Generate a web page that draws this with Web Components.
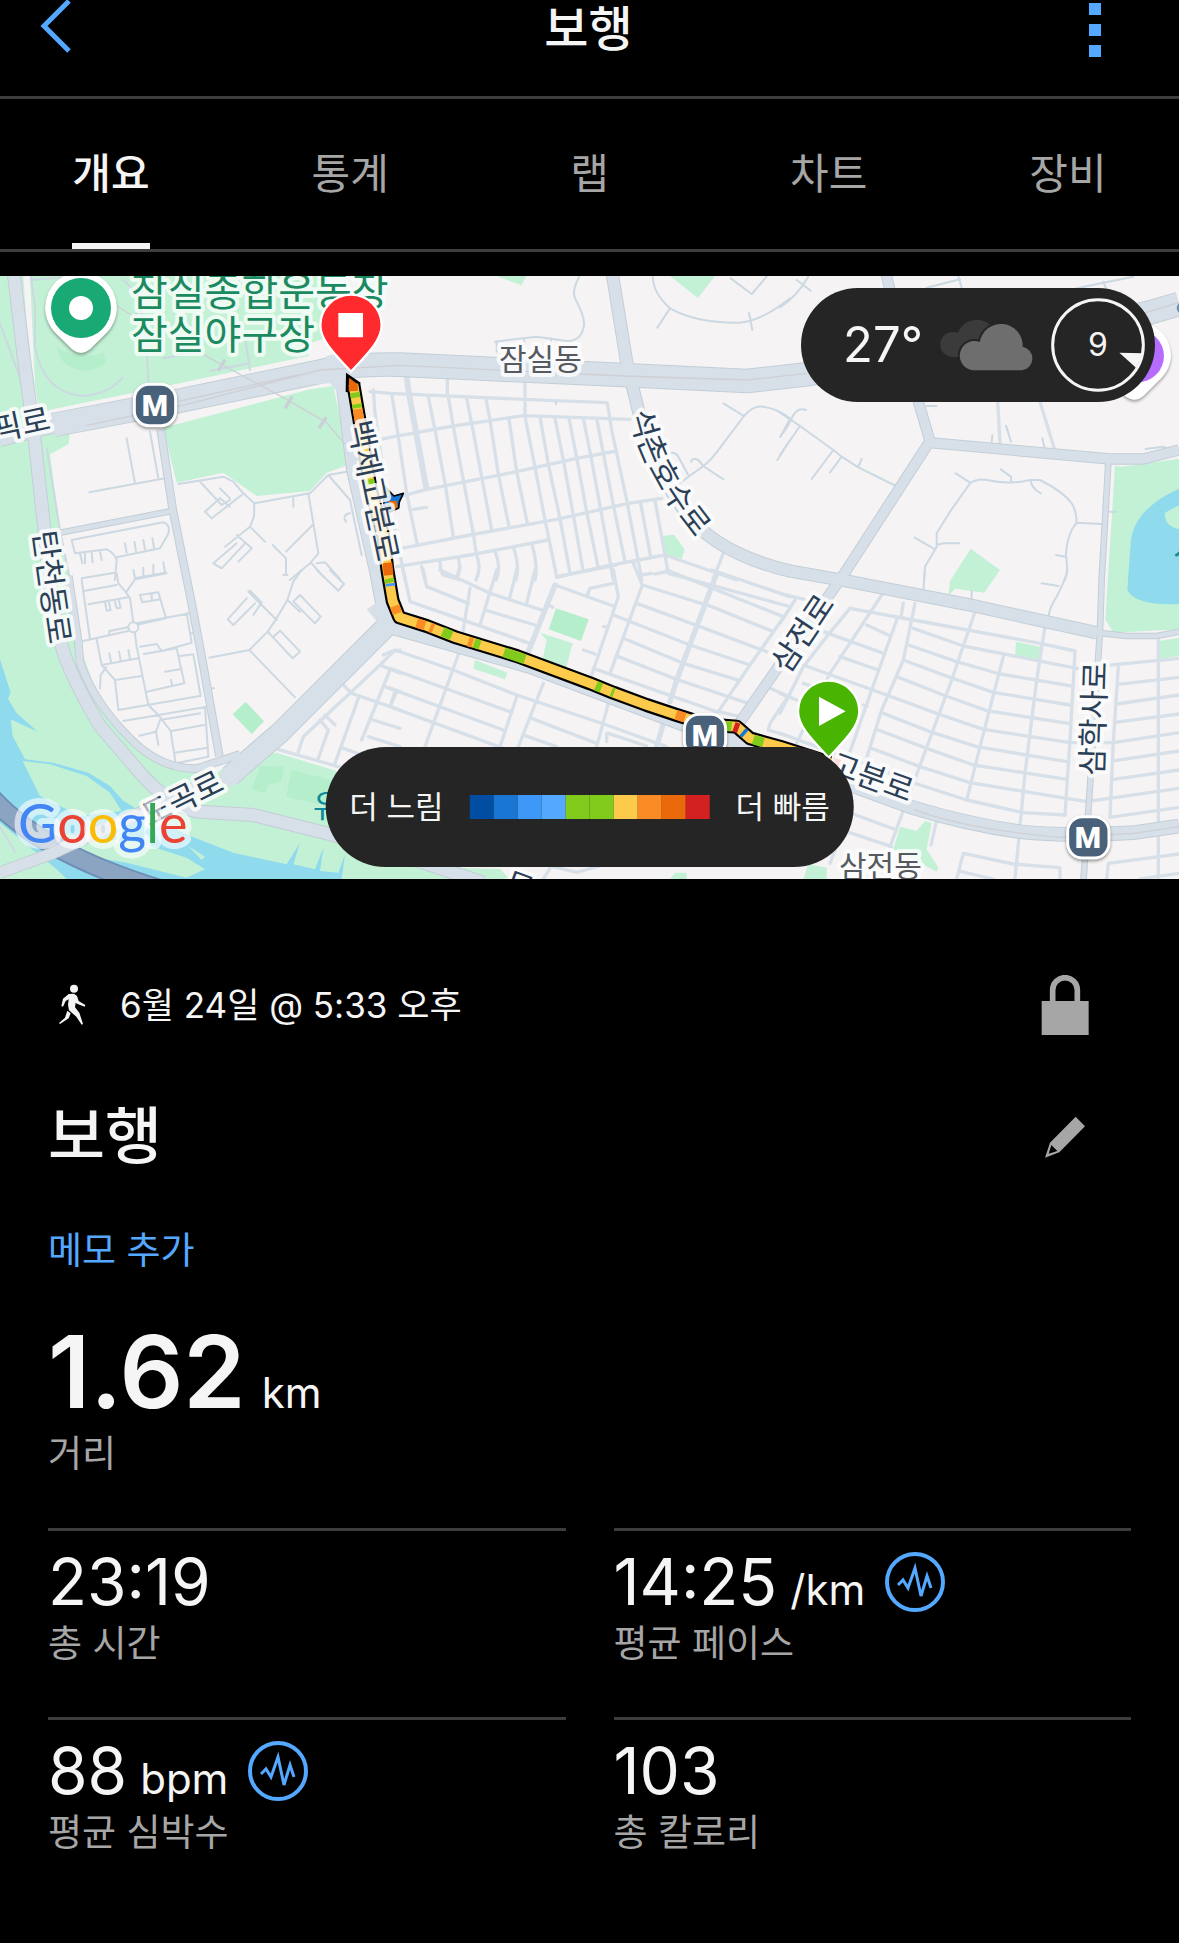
<!DOCTYPE html>
<html lang="ko">
<head>
<meta charset="utf-8">
<meta name="viewport" content="width=device-width, initial-scale=1">
<title>보행</title>
<style>
  body {
    margin: 0;
    min-height: 100vh;
    background: #000;
    color: #f5f5f5;
    font-family: Inter, "Noto Sans CJK KR", sans-serif;
    --blue: #54a8ff;
    --line: #3d3d3d;
    --muted: #a6a6a6;
    --panel: #252525;
  }
</style>
</head>
<body>
<app-header>보행</app-header>
<tab-bar>
  <tab-item active>개요</tab-item>
  <tab-item>통계</tab-item>
  <tab-item>랩</tab-item>
  <tab-item>차트</tab-item>
  <tab-item>장비</tab-item>
</tab-bar>
<route-map>
  <weather-badge slot="top" wind="9">27°</weather-badge>
  <pace-legend slot="bottom">
    <span slot="slow">더 느림</span>
    <span slot="fast">더 빠름</span>
  </pace-legend>
</route-map>
<activity-details>
  <span slot="date">6월 24일 @ 5:33 오후</span>
  <span slot="name">보행</span>
  <span slot="note">메모 추가</span>
  <stat-item slot="main" large value="1.62" unit="km">거리</stat-item>
  <stat-item value="23:19">총 시간</stat-item>
  <stat-item value="14:25" unit="/km" chart>평균 페이스</stat-item>
  <stat-item value="88" unit="bpm" chart>평균 심박수</stat-item>
  <stat-item value="103">총 칼로리</stat-item>
</activity-details>

<script>
const base_css = `
* {
    box-sizing: border-box;
}
button {
    border: none;
    background: none;
    padding: 0;
    margin: 0;
    color: inherit;
    font: inherit;
    cursor: pointer;
}
svg {
    display: block;
}
`

function makeTemplate(css, html){
    const template = document.createElement('template')
    template.innerHTML = `<style>${base_css}${css}</style>${html}`
    return template
}

class BaseElement extends HTMLElement{
    constructor(){
        super()
        this.attachShadow({mode:'open'})
        this.shadowRoot.appendChild(this.constructor.template.content.cloneNode(true))
    }
}

// header
class AppHeader extends BaseElement{
    static template = makeTemplate(`
:host {
    display: grid;
    grid-template-columns: 1fr auto 1fr;
    align-items: center;
    padding: 0 54px 38px 24px;
    border-bottom: 3px solid var(--line);
}
h1 {
    margin: 0 0 0 28px;
    font-size: 48px;
    line-height: 58px;
    font-weight: 500;
}
.menuBtn {
    justify-self: end;
}
`, `
<button class="backBtn" aria-label="뒤로">
    <svg width="60" height="58" viewBox="0 0 60 58" fill="none" stroke="#54a8ff" stroke-width="5"><path d="M45,1 L20,26 L45,51"/></svg>
</button>
<h1><slot></slot></h1>
<button class="menuBtn" aria-label="메뉴">
    <svg width="60" height="58" viewBox="0 0 60 58" fill="#54a8ff"><path d="M24,3h12v12h-12z M24,24h12v12h-12z M24,45h12v12h-12z"/></svg>
</button>
`)
}

// tabs
class TabBar extends BaseElement{
    static template = makeTemplate(`
:host {
    display: block;
    border-bottom: 3px solid var(--line);
    margin-bottom: 24px;
}
nav {
    display: flex;
    justify-content: space-between;
    padding: 0 72px;
}
`, `<nav><slot></slot></nav>`)
}

class TabItem extends BaseElement{
    static template = makeTemplate(`
:host {
    display: block;
    width: 78px;
}
a {
    display: block;
    padding: 48px 0 42px;
    border-bottom: 6px solid transparent;
    color: var(--muted);
    font-size: 42px;
    line-height: 54px;
    text-align: center;
    white-space: nowrap;
    text-decoration: none;
}
:host([active]) a {
    color: #f5f5f5;
    font-weight: 500;
    border-color: #f5f5f5;
}
`, `<a href="#"><slot></slot></a>`)
}

// weather badge
class WeatherBadge extends BaseElement{
    static template = makeTemplate(`
:host {
    display: flex;
    align-items: center;
    gap: 17px;
    height: 114px;
    padding: 0 10px 0 42px;
    border-radius: 57px;
    background: var(--panel);
}
.temp {
    font-size: 49px;
    line-height: 60px;
    font-weight: 400;
}
.wind {
    display: grid;
    place-items: center;
    font-size: 32px;
    line-height: 40px;
    font-weight: 400;
}
.wind > * {
    grid-area: 1 / 1;
}
`, `
<span class="temp"><slot></slot></span>
<svg width="94" height="54" viewBox="480 144 282 162">
    <path fill="#3b3b3b" d="M518,261 a37,37 0 0 1 0,-75 q8,0 16,2 a60,60 0 0 1 112,0 v73z"/>
    <path fill="#6e6e6e" stroke="#252525" stroke-width="12" paint-order="stroke" d="M580,301 a44,44 0 1 1 19,-85 a65,65 0 0 1 129,14 a36,36 0 0 1 -2,71z"/>
</svg>
<div class="wind">
    <svg width="94" height="94" viewBox="813 83 282 282">
        <circle cx="954" cy="224" r="136" fill="none" stroke="#f5f5f5" stroke-width="9"/>
        <path fill="#f5f5f5" d="M1018,247 L1090,249 L1068,292z"/>
    </svg>
    <span id="wind"></span>
</div>
`)
    connectedCallback(){
        this.shadowRoot.getElementById('wind').textContent = this.getAttribute('wind')
    }
}

// pace legend
class PaceLegend extends BaseElement{
    static template = makeTemplate(`
:host {
    display: flex;
    align-items: center;
    gap: 26px;
    height: 120px;
    padding: 0 24px;
    border-radius: 60px;
    background: var(--panel);
    font-size: 31px;
    line-height: 40px;
    font-weight: 400;
    white-space: nowrap;
}
.bar {
    display: flex;
    height: 24px;
}
.bar i {
    width: 24px;
}
`, `
<slot name="slow"></slot>
<div class="bar"></div>
<slot name="fast"></slot>
`)
    connectedCallback(){
        const colors = ['#004da1','#1976d2','#3d98f7','#54a8ff','#81cb1c','#81cb1c','#fccb4b','#fb8b24','#ea690b','#d32020']
        this.shadowRoot.querySelector('.bar').innerHTML = colors.map(c => `<i style="background:${c}"></i>`).join('')
    }
}

// map
class RouteMap extends BaseElement{
    static template = makeTemplate(`
:host {
    display: grid;
    position: relative;
    height: 603px;
    overflow: hidden;
    background: #f5f3f4;
}
svg {
    grid-area: 1 / 1;
    width: 100%;
    height: 603px;
}
.road {
    fill: none;
    stroke-linejoin: round;
}
.edge {
    stroke: #c3ced7;
}
.fillRoad {
    stroke: #d7e0e8;
}
.street {
    fill: none;
    stroke: #d7e0e8;
    stroke-width: 10;
    stroke-linejoin: round;
    stroke-linecap: round;
}
.lane {
    fill: none;
    stroke: #ccd8e2;
    stroke-width: 6;
    stroke-linejoin: round;
    stroke-linecap: round;
}
text {
    font-family: "Noto Sans CJK KR", sans-serif;
    paint-order: stroke;
    stroke: rgba(253, 253, 253, .85);
    stroke-width: 8px;
    stroke-linejoin: round;
    fill: #2b3f57;
    font-size: 31px;
}
.place {
    font-size: 40px;
    fill: #1b8a60;
    stroke: rgba(245, 253, 249, .85);
}
.area {
    fill: #565a5f;
    font-size: 30px;
}
.metro {
    font-family: Roboto, sans-serif;
    font-size: 30px;
    font-weight: 900;
    fill: #fff;
    stroke: none;
    text-anchor: middle;
}
.google {
    font-family: Lato, sans-serif;
    font-size: 54px;
    font-weight: 400;
    stroke: rgba(255, 255, 255, .6);
    stroke-width: 12px;
}
.top {
    position: absolute;
    top: 12px;
    right: 24px;
}
.bottom {
    position: absolute;
    bottom: 12px;
    left: 50%;
    transform: translateX(-50%);
}
`, `
<svg viewBox="0 0 3537 1809" preserveAspectRatio="xMidYMid slice" aria-hidden="true">
    <!-- parks -->
    <g fill="#c3f1d5">
        <path d="M0,-18 H985 L968,190 L930,200 L925,240 L500,330 L160,400 L100,420 L150,470 L210,472 L205,505 L150,535 L180,760 L205,900 L240,1110 L300,1280 L420,1410 L540,1475 L640,1500 L700,1450 L830,1430 L1010,1485 H1300 V1809 H0z"/>
        <path d="M490,455 L930,340 L1000,330 L1050,565 L980,590 L930,645 L770,660 L670,590 L530,620z"/>
        <path d="M1490,0 H1578 L1565,28z M2010,0 H2145 L2094,66z"/>
        <path d="M1985,780 L2022,776 L2054,820 L2045,848 L1990,835z"/>
        <path d="M1620,1070 L1718,1102 L1698,1176 L1628,1150 L1640,1092z M1425,1152 L1522,1190 L1515,1210 L1420,1178z"/>
        <path d="M3345,570 L3365,572 L3537,548 V1060 L3340,1070 L3316,1030z M3477,1095 L3537,1085 V1140 L3477,1150z"/>
        <path d="M2912,818 L3000,882 L2953,950 L2865,938 L2845,960 L2850,915z M3048,1097 L3120,1112 L3117,1155 L3045,1140z"/>
        <path d="M2700,1652 L2750,1665 L2775,1635 L2795,1640 L2780,1720 L2815,1775 L2810,1787 L2680,1720z M2425,1765 L2480,1775 V1809 H2410z"/>
        <path d="M1170,1770 L1500,1779 L1530,1809 H1170z M2025,1790 h35 v19 h-50z"/>
    </g>
    <path fill="#f5f3f4" d="M90,0 L105,330 L118,415 L150,405 L350,360 L160,400 L98,410 L70,0z"/>
    <g fill="#b4eecb">
        <path d="M170,215 q80,40 140,15 l8,30 q-70,50 -130,-5z"/>
        <path d="M737,1277 L792,1336 L755,1374 L698,1315z M1668,997 L1766,1030 L1743,1095 L1646,1060z"/>
        <path d="M780,1470 l72,2 l-8,45 l-42,10 l-5,24 l-42,-10z M875,1482 L1005,1515 V1595 L858,1562z"/>
    </g>
    <!-- water -->
    <g fill="#90daee">
        <path d="M0,1150 L32,1250 L24,1268 L50,1312 L114,1368 L32,1330 L38,1380 L75,1450 L160,1460 L265,1490 L330,1530 L370,1575 L430,1610 L570,1680 L700,1730 L860,1765 L900,1700 L880,1765 L945,1780 L970,1715 L960,1785 L1015,1790 L1035,1735 L1025,1809 H0z"/>
        <path d="M3537,638 Q3400,700 3392,800 L3382,940 Q3400,990 3537,984z"/>
    </g>
    <path fill="#c3f1d5" d="M68,1455 L150,1465 L260,1500 L330,1550 L365,1605 L240,1620 L120,1560z M60,1655 L240,1680 L420,1700 L560,1745 L615,1780 L560,1805 L380,1760 L200,1730z M565,1710 l50,32 l-10,10 z M3495,710 l42,-22 v72 q-45,-10 -42,-50z M0,1640 L170,1780 L200,1809 H0z"/>
    <path class="road" stroke="#6d8fb5" stroke-width="62" d="M-30,1560 Q120,1730 480,1840"/>
    <path class="road" stroke="#8ba4c2" stroke-width="50" d="M-30,1560 Q120,1730 480,1840"/>

    <!-- apartment lanes, north west -->
    <g class="lane" transform="translate(0 -18)">
        <path d="M95,30 L210,20 M90,0 L105,110 V230 Q130,370 250,378 Q330,370 368,322 M0,160 L70,350 M370,30 L420,80 L440,240 L445,335 M490,265 L600,245 M735,200 L750,300 M630,302 L750,280 M400,140 L480,60"/>
        <path d="M380,505 L405,640 M268,667 L495,625 M450,485 L475,625 M140,535 L180,780 L210,930 M535,642 L670,620 L700,635 L730,670 L763,700 L930,670 L985,615 L1040,605 M763,700 L762,740 L750,770 L675,830 M600,635 L665,705 L690,690 M660,655 L690,685 M725,675 L635,745 L615,725 L660,685 L690,710 M750,770 L795,815 M710,795 L755,835 L715,875 M735,820 L665,895 L640,880 L710,820 M818,825 L858,865 V915 M925,670 L955,850 L930,880 L870,930 M938,765 L858,845 M985,615 L1050,690 L1085,855 M1050,730 q-25,5 -12,25 M935,880 L970,920 M950,880 l25,-3 l45,50 M880,685 v25"/>
        <path d="M215,810 L225,850 L320,838 Q345,850 350,870 L345,930 M215,810 L490,757 Q515,765 503,795 L480,835 L350,862 M240,850 L247,880 M255,850 v30 M275,848 L278,877 M300,845 L305,870 M375,820 L380,848 M403,815 L408,843 M430,810 L435,838 M457,805 L462,833 M400,900 L405,925 L495,908 L490,877 M430,893 v25 M460,885 v25 M245,925 L345,908"/>
    </g>
    <g class="lane" transform="translate(0 882)">
        <path d="M245,30 L270,208 M255,62 L350,45 M265,103 L385,82 M350,10 L355,40 L378,67 L405,28 L500,10 M378,67 L390,85 L410,230 L445,405 L475,435 L512,483 L527,580 L625,560 L615,410 M420,75 L475,67 L498,145 L385,170 M420,75 L427,97 L482,88 M455,72 v20 M315,97 l5,25 l12,-2 l-5,-22 M345,95 l5,20 l12,-2 l-5,-20 M240,215 L330,195 L385,183 M328,195 V183 L385,172 M290,208 L305,285 L345,330 L355,420 L600,378 M305,285 L415,265 M345,330 L425,318 M300,355 L302,315 L318,292 M328,250 L333,275 M357,245 L362,270 M385,240 L390,265 M420,230 L470,222 L485,243 L575,218 L560,130 M432,252 L530,235 L553,340 L440,365 M495,305 L545,297 M513,330 L517,348 M540,258 L580,253 L602,378 M370,453 L620,410 M418,497 L468,485 L475,525 M468,485 L480,450 L600,430 M515,483 L612,465 M523,548 L625,533 M410,160 L570,130 M570,190 h12 M632,355 h10"/>
        <path d="M628,263 L748,240 L803,185 L830,145 L862,90 L880,35 L905,0 M748,240 L885,382 M830,150 L745,65 L750,62 L785,97 L760,135 M740,85 L683,148 L700,165 L765,100 M862,90 L900,125 M880,95 L900,75 L962,140 L945,160 L880,95 M803,185 L878,265 L900,245 L840,182 L820,200 M950,0 L1015,62 L1032,42 L990,0 M850,15 h12 M0,770 L45,845"/>
        <circle cx="400" cy="172" r="15" fill="#f5f3f4"/>
    </g>
    <g class="street" transform="translate(0 882)">
        <path d="M805,530 L1015,590 L1200,640 M1015,330 L1055,370 L1200,420 M895,545 L910,500 L1140,285 L1180,245 L1200,240 M1140,285 L1200,310 M1170,300 L1085,510 M1075,385 L1005,580 M955,565 L985,480 L960,450 M975,435 L1005,465 M1120,450 L1200,475 M1105,500 L1200,530 M1030,535 L1100,560 M1155,350 L1200,365 M1190,365 L1175,400 M945,400 l12,12"/>
    </g>

    <!-- grid blocks south of 잠실동 -->
    <g class="street" transform="translate(1170 -18)">
        <path d="M-60,365 L0,370 L400,388 L652,398 L665,480 L710,690 L750,900 L755,930 M-60,515 L0,502 L190,468 L400,437 L720,448 M30,680 L110,658 L380,605 L560,565 L680,543 M35,835 L240,795 L500,748 L715,700 L815,685 M20,890 L240,855 L475,810 M500,922 L640,890 L825,855 M405,335 V437 M172,325 V375"/>
        <path d="M5,370 L25,500 L50,670 L82,825 M115,380 L135,480 L165,640 L190,800 M175,380 L190,470 L220,630 L250,790 L258,845 M230,385 L245,460 L275,620 L305,780 M288,388 L300,450 L325,612 L357,770 M357,448 L380,605 L412,760 M405,440 L435,592 L465,750 L500,920 M450,440 L475,583 L510,745 L540,910 M495,445 L520,570 L550,735 L580,905 M537,445 L560,562 L590,725 L625,895 M580,445 L602,555 L632,718 L670,930 M620,445 L640,550 L670,705 L705,875 M752,700 L782,860 M795,692 L835,910 L1200,1010 M825,855 L1040,930 M1000,850 L970,925"/>
        <path d="M70,718 L110,712 M150,870 Q150,905 160,915 L210,930 M205,865 Q215,900 200,925 M260,855 Q275,895 258,930 M315,845 Q335,890 318,930 M370,830 Q390,890 378,930 M425,820 Q445,890 435,930 M95,890 L105,930 M10,750 L45,930 M-50,360 L-45,430 L0,750 M755,915 l30,-5 M795,912 l35,-7"/>
    </g>
    <g class="lane" transform="translate(1170 -18)">
        <path d="M568,20 Q545,60 555,85 Q590,150 580,175 Q570,215 530,213 L440,200 L315,215 M320,215 v30 M403,205 v20 M483,205 v15 M788,20 Q790,70 840,115 Q920,160 1050,158 Q1120,150 1200,85 M840,115 L802,173 M1077,128 L1087,180 M1022,25 L1085,72 L1130,20 M1000,400 L1062,438 M855,650 L940,588 Q965,570 1000,520 L1062,438 Q1090,405 1120,410 Q1160,415 1200,445 L1172,500 M1200,510 L1162,570 M940,588 L1000,628 M940,588 L925,570 Q908,562 903,575 M828,555 Q855,540 865,560 L895,615 M498,395 v8"/>
    </g>
    <g class="lane" transform="translate(2340 -18)">
        <path d="M0,112 Q50,80 85,20 M50,30 L92,62 M440,53 L540,28 M535,20 L545,53 M890,55 L1060,20 M970,35 l8,20 M0,428 L60,468 L160,540 L185,560 L235,592 L348,648 M0,500 Q25,470 35,445 Q50,410 78,420 M60,468 L0,555 M160,540 L95,627 M185,560 L150,607 M235,590 L245,567 M440,408 h30 M637,495 L635,515 M678,467 L693,515 M787,505 L793,530"/>
        <path d="M432,930 L435,890 L470,830 V790 L510,725 L570,640 Q590,625 620,630 Q690,645 750,630 H780 Q850,665 875,700 Q890,725 890,758 Q862,790 858,850 L862,900 L855,930 M527,610 L570,638 M662,598 L693,620 V638 M752,632 Q755,655 782,670 M404,803 L465,838 M470,825 L490,820 H538 M890,758 L965,762 M828,855 L858,860 M990,725 h20 M1097,537 L1150,530 Q1165,535 1160,545"/>
        <path d="M435,900 L430,962 M575,962 v25 M860,900 L862,905 Q855,930 830,980 Q810,1010 805,1040 M785,940 L835,948"/>
    </g>
    <path class="street" d="M2993,377 L3000,500 M3120,377 L3162,515"/>

    <!-- grid blocks around 삼전동 -->
    <g class="street" transform="translate(1170 882)">
        <path d="M15,240 L190,300 L380,375 L650,465 L830,530 M-20,255 L15,240 M0,295 L360,425 M0,355 L340,480 M0,410 L340,535 M15,365 L0,410 M320,0 L270,165 M240,55 L210,240 L105,530 M460,340 L385,530 M380,380 L330,530 M655,400 L620,530 M40,0 L60,95 L420,220 M100,0 L110,50 L235,100 M150,0 L300,70 L455,120 M285,120 L435,165 M435,0 L410,100 M380,0 L360,80 M210,-10 L200,20 M425,445 L620,520 M405,497 L500,530"/>
        <path d="M495,45 L670,108 M500,20 L680,-15 M590,80 L600,55 L670,40 M670,0 L685,80 L605,315 M730,-20 L757,45 L660,310 M757,45 L965,110 L1150,185 M830,0 L1180,140 M740,100 L930,170 L1130,245 M670,135 L900,225 L1080,285 M700,205 L880,280 L1050,332 M685,260 L860,328 L1075,400 M610,295 L850,380 L980,425 M1200,115 L1080,285 L985,425 L1050,440 M965,0 L1200,80 M580,240 L615,252 M475,105 L488,112 M640,170 h10 M1140,355 L1200,380 M1200,370 L1140,460 L1135,480 L1200,500 M655,490 L770,528 M650,515 V490 M480,895 L460,927 M490,890 L560,907 L640,885"/>
        <path stroke-width="16" d="M495,45 L415,245 M980,10 L860,330 L840,395 M820,460 L800,530"/>
    </g>
    <path fill="none" stroke="#d7e0e8" stroke-width="18" d="M1220,300 L1225,342 L1280,642"/>
    <g class="street" transform="translate(2340 882)">
        <path d="M210,115 L140,200 L70,290 L0,430 M305,75 L150,310 L45,530 M350,150 L275,360 L205,560 M405,100 L370,270 L305,420 L255,580 M585,125 L515,330 L400,640 L330,830 M670,260 L600,530 L560,690 M795,170 L770,330 L735,610 L705,927 M885,243 L870,510 L855,735 M1015,290 L1000,515 L990,740 M1135,200 V927 M370,100 L363,140 M0,70 L80,90 M45,90 L0,160"/>
        <path d="M210,115 L400,150 L780,220 L885,243 M400,175 L550,228 L890,295 L1197,265 M385,225 L530,275 L660,312 L875,348 M370,270 L510,322 L640,367 L870,405 M350,320 L490,375 L620,422 L865,460 M130,185 L305,248 M180,260 L295,300 M260,165 L330,197 M70,285 L320,375 L470,430 L610,478 L870,518 H1000 L1197,488 M310,430 L450,485 L590,530 L860,575 M295,480 L440,535 L580,585 L860,628 M275,535 L420,590 L570,638 L920,695 L1197,655 M0,490 L250,580 L405,640 L560,690 L730,728 L855,735 M0,370 L50,390 M70,340 L130,360"/>
        <path d="M1015,343 L1197,322 M1010,402 L1197,375 M1005,457 L1197,432 M1005,572 L1197,543 M1000,628 L1197,600 M990,742 L1197,712 M530,927 L550,850 L700,882 L840,893 V927 M545,905 L640,927 M980,927 L985,880 L1197,852 M1080,927 L1197,910 M200,725 L350,780 M200,785 L335,830 M150,880 L165,840 M250,405 l12,3 M470,750 L453,825"/>
    </g>

    <!-- main roads: outline first, then surface -->
    <g class="road edge">
        <path stroke-width="74" d="M160,447 L500,382 L960,287 Q1050,262 1200,266 L1500,280 L1870,297 L2240,315 L2420,295 L3440,112 L3537,84"/>
        <path stroke-width="42" d="M0,492 L200,442 M40,-20 L72,250 L105,500 L135,780 L155,960 L185,1110 Q210,1200 300,1350 L420,1490 Q520,1600 600,1607 L760,1617 L1000,1677 L1270,1760 L1450,1820"/>
        <path stroke-width="38" d="M0,1790 L150,1735 L420,1610 L640,1510"/>
        <path stroke-width="66" d="M690,1500 L730,1465 L840,1370 L1160,1050"/>
        <path stroke-width="26" d="M482,460 L518,700 L575,982 L605,1142 L658,1440 M205,900 L235,1100 L240,1160 Q290,1300 420,1415 Q500,1480 590,1478 L720,1435"/>
        <path stroke-width="20" d="M180,770 L515,705"/>
        <path stroke-width="44" d="M1025,290 L1060,580 L1130,890 L1160,1050 L1590,1172 L2010,1330 L2260,1420 L2730,1592 Q2900,1645 3060,1667 Q3200,1682 3400,1670 L3537,1650"/>
        <path stroke-width="40" d="M1835,-18 L1882,270 L1912,390 Q1950,560 2050,700 Q2140,830 2370,885 L2540,915 L2900,985 L3290,1070"/>
        <path stroke-width="34" d="M2655,-18 L2755,377 L2790,495 L2530,897 L2330,1180 L2170,1410 M2790,500 L3330,549 H3430 L3537,522"/>
        <path stroke-width="20" d="M3290,1070 L3380,1080 H3470 L3537,1067 M3325,560 L3305,910 L3300,1062 L3270,1530 L3250,1820"/>
    </g>
    <g class="road fillRoad">
        <path stroke-width="68" d="M160,447 L500,382 L960,287 Q1050,262 1200,266 L1500,280 L1870,297 L2240,315 L2420,295 L3440,112 L3537,84"/>
        <path stroke-width="36" d="M0,492 L200,442 M40,-20 L72,250 L105,500 L135,780 L155,960 L185,1110 Q210,1200 300,1350 L420,1490 Q520,1600 600,1607 L760,1617 L1000,1677 L1270,1760 L1450,1820"/>
        <path stroke-width="32" d="M0,1790 L150,1735 L420,1610 L640,1510"/>
        <path stroke-width="60" stroke-linecap="round" d="M690,1500 L730,1465 L840,1370 L1160,1050"/>
        <path stroke-width="20" d="M482,460 L518,700 L575,982 L605,1142 L658,1440 M205,900 L235,1100 L240,1160 Q290,1300 420,1415 Q500,1480 590,1478 L720,1435"/>
        <path stroke-width="14" d="M180,770 L515,705"/>
        <path stroke-width="38" d="M1025,290 L1060,580 L1130,890 L1160,1050 L1590,1172 L2010,1330 L2260,1420 L2730,1592 Q2900,1645 3060,1667 Q3200,1682 3400,1670 L3537,1650"/>
        <path stroke-width="34" d="M1835,-18 L1882,270 L1912,390 Q1950,560 2050,700 Q2140,830 2370,885 L2540,915 L2900,985 L3290,1070"/>
        <path stroke-width="28" d="M2655,-18 L2755,377 L2790,495 L2530,897 L2330,1180 L2170,1410 M2790,500 L3330,549 H3430 L3537,522"/>
        <path stroke-width="14" d="M3290,1070 L3380,1080 H3470 L3537,1067 M3325,560 L3305,910 L3300,1062 L3270,1530 L3250,1820"/>
    </g>
    <path fill="#d7e0e8" d="M1100,1000 L1160,960 L1230,1060 L1160,1070z M980,240 L1060,225 L1060,340 L1010,345 L990,322 L940,325z"/>
    <path class="road" stroke="#cfcfd6" stroke-width="4" d="M260,448 L560,385 L960,282 L1200,268 L1870,300 L2240,312 L2420,292 M540,375 L900,295 M3430,112 L3537,80 M610,236 L860,370 L980,440 L1035,505 M350,90 L400,120 M2740,1600 Q2900,1660 3180,1684 L3400,1672 L3537,1652"/>
    <path class="road" stroke="#c9d0d8" stroke-width="10" d="M855,397 l22,-36 M957,457 l22,-34 M655,285 l20,-34"/>
    <path fill="#f8dcd8" d="M2500,1445 L2552,1455 L2540,1478 L2510,1470z"/>

    <!-- recorded track -->
    <g fill="none" stroke-linejoin="round">
        <path fill="#000" d="M1038,290 L1082,320 L1060,350 L1037,348z"/>
        <path stroke="#000" stroke-width="42" d="M1060,325 L1078,430 L1112,640 L1150,780 L1162,880 L1166,905 L1178,975 L1198,1024 L1280,1050 L1370,1085 L1550,1140 L1770,1222 L1840,1250 L1940,1287 L2030,1317 L2120,1345 L2210,1352 L2250,1387 L2340,1412 L2490,1460"/>
        <path stroke="#fccb4b" stroke-width="29" d="M1060,325 L1078,430 L1112,640 L1150,780 L1162,880 L1166,905 L1178,975 L1198,1024 L1280,1050 L1370,1085 L1550,1140 L1770,1222 L1840,1250 L1940,1287 L2030,1317 L2120,1345 L2210,1352 L2250,1387 L2340,1412 L2490,1460"/>
        <path fill="#ea690b" d="M1047,305 L1073,325 L1074,344 L1046,346z"/>
        <g stroke-width="29">
            <path stroke="#ea690b" d="M1162,860 L1166,898"/>
            <path stroke="#81cb1c" d="M1064,350 L1067,365 M1070,384 L1072,396 M1108,610 L1112,630 M1167,908 L1170,920"/>
            <path stroke="#fb8b24" d="M1073,400 L1081,450 M1184,990 L1192,1012 M1250,1041 L1275,1049 M1290,1054 L1300,1058 M1405,1097 L1418,1101 M2028,1316 L2055,1325"/>
            <path stroke="#81cb1c" d="M1328,1067 L1355,1079 M1422,1101 L1440,1107 M1512,1129 L1575,1150 M1788,1229 L1804,1236 M1834,1247 L1842,1250 M2170,1350 L2195,1352 M2260,1390 L2290,1400"/>
            <path stroke="#d32020" d="M2202,1352 L2216,1357"/>
            <path stroke="#1976d2" d="M2228,1367 L2236,1374"/>
            <path stroke="#3d98f7" d="M1171,922 L1172,930"/>
        </g>
    </g>
    <g stroke="#000" stroke-width="5" stroke-linejoin="round">
        <path fill="#1976d2" d="M1150,628 L1182,660 L1210,652 L1198,678 L1196,696 L1170,708 L1152,690z"/>
        <path fill="#ea690b" stroke="none" d="M1165,676 l24,-2 l4,20 l-16,6z"/>
        <path fill="#81cb1c" stroke="none" d="M1153,635 l14,17 l-6,18 l-8,-10z"/>
    </g>
</svg>

<svg viewBox="0 0 1179 603" preserveAspectRatio="xMidYMid slice">
    <defs>
        <path id="tancheon" d="M33,256 L39,300 L50,375"/>
        <path id="baekje" d="M348,147 L380,300"/>
        <path id="seokchon" d="M630,137 Q642,200 702,270"/>
        <path id="samjeon" d="M788,399 L840,321"/>
        <path id="samhak" d="M1103,500 L1107,370"/>
        <path id="gobun" d="M828,497 L930,534"/>
    </defs>
    <text class="place" x="131" y="30">잠실종합운동장</text>
    <text class="place" x="131" y="73">잠실야구장</text>
    <text class="area" x="499" y="94">잠실동</text>
    <text class="area" x="839" y="601">삼전동</text>
    <text transform="translate(-4 165) rotate(-12)">픽로</text>
    <text><textPath href="#tancheon">탄천동로</textPath></text>
    <text><textPath href="#baekje">백제고분로</textPath></text>
    <text><textPath href="#seokchon">석촌호수로</textPath></text>
    <text><textPath href="#samjeon">삼전로</textPath></text>
    <text><textPath href="#samhak">삼학사로</textPath></text>
    <text><textPath href="#gobun">고분로</textPath></text>
    <text transform="translate(149 551) rotate(-26)">도곡로</text>
    <text transform="translate(502 616) rotate(20)">문</text>
    <text x="313" y="541" style="fill:#0c8a9c;stroke:none">유</text>
    <text x="1173" y="290" style="fill:#0c8a9c;stroke:none">석</text>
    <text class="google" x="18" y="567"><tspan fill="#4285f4">G</tspan><tspan fill="#ea4335">o</tspan><tspan fill="#fbbc05">o</tspan><tspan fill="#4285f4">g</tspan><tspan fill="#34a853">l</tspan><tspan fill="#ea4335">e</tspan></text>
</svg>

<!-- pins and stations, above the labels -->
<svg viewBox="0 0 3537 1809" preserveAspectRatio="xMidYMid slice" aria-hidden="true">
    <path fill="#fff" d="M243,-13 a108,108 0 0 1 80,180 L270,220 q-27,22 -54,0 L163,167 a108,108 0 0 1 80,-180z" filter="drop-shadow(0 6px 4px #0005)"/>
    <circle cx="243" cy="96" r="90" fill="#19a974"/>
    <circle cx="243" cy="96" r="36" fill="#fff"/>
    <path fill="#fff" d="M3413,140 a97,97 0 0 1 72,165 L3430,360 q-25,22 -55,0 L3330,310z" filter="drop-shadow(0 6px 4px #0005)"/>
    <circle cx="3413" cy="240" r="79" fill="#b56cff"/>
    <circle cx="3548" cy="96" r="18" fill="#6d8fb5"/>
    <g stroke="#fff" stroke-width="7">
        <path fill="#ff2a2e" d="M1053,56 a92,92 0 0 1 92,92 C1145,200 1085,250 1053,287 C1021,250 961,200 961,148 a92,92 0 0 1 92,-92z"/>
        <path fill="#49b402" d="M2486,1214 a92,92 0 0 1 92,92 C2578,1358 2518,1408 2486,1445 C2454,1408 2394,1358 2394,1306 a92,92 0 0 1 92,-92z"/>
    </g>
    <path fill="#fff" d="M1015,111 h74 v73 h-74z M2457,1262 L2537,1306 L2457,1350z"/>
    <g fill="#4a6279" stroke="#fff" stroke-width="9" filter="drop-shadow(0 5px 4px #0006)">
        <rect x="403" y="325" width="124" height="124" rx="44"/>
        <rect x="2053" y="1315" width="124" height="124" rx="44"/>
        <rect x="3203" y="1622" width="124" height="124" rx="44"/>
    </g>
</svg>
<svg viewBox="0 0 1179 603" preserveAspectRatio="xMidYMid slice">
    <text class="metro" x="155" y="140">M</text>
    <text class="metro" x="705" y="470">M</text>
    <text class="metro" x="1088" y="572">M</text>
</svg>
<div class="top"><slot name="top"></slot></div>
<div class="bottom"><slot name="bottom"></slot></div>
`)
}

// stats
class StatItem extends BaseElement{
    static template = makeTemplate(`
:host {
    display: block;
    padding: 21px 0 51px;
    border-top: 3px solid var(--line);
}
:host([large]) {
    padding: 0 0 52px;
    border-top: none;
}
.row {
    display: flex;
    align-items: center;
    gap: 20px;
    margin-bottom: 10px;
}
.number {
    display: flex;
    align-items: baseline;
    gap: 13px;
    font-size: 64px;
    line-height: 60px;
    white-space: nowrap;
}
:host([large]) .number {
    gap: 16px;
    font-size: 100px;
    line-height: 100px;
    font-weight: 600;
}
.number .unit {
    font-size: 42px;
    line-height: 40px;
    font-weight: 400;
}
.unit:empty {
    display: none;
}
.label {
    color: var(--muted);
    font-size: 37px;
    line-height: 44px;
}
.chartBtn {
    display: none;
}
:host([chart]) .chartBtn {
    display: block;
}
`, `
<div class="row">
    <div class="number"><span class="value"></span><span class="unit"></span></div>
    <button class="chartBtn" aria-label="차트 보기">
        <svg width="60" height="60" viewBox="0 0 60 60" fill="none" stroke="#54a8ff" stroke-width="4"><circle cx="30" cy="30" r="28"/><path stroke-width="3" d="M13,33 L18,28 L23,36 L30,16 L36,44 L42,24 L46,36"/></svg>
    </button>
</div>
<div class="label"><slot></slot></div>
`)
    connectedCallback(){
        this.shadowRoot.querySelector('.value').textContent = this.getAttribute('value')
        this.shadowRoot.querySelector('.unit').textContent = this.getAttribute('unit') || ''
    }
}

// activity details
class ActivityDetails extends BaseElement{
    static template = makeTemplate(`
:host {
    display: block;
    padding: 96px 48px 0;
}
.line {
    display: flex;
    align-items: center;
}
.line button {
    width: 132px;
    margin-left: auto;
}
.line button svg {
    margin: auto;
}
.date {
    gap: 24px;
    font-size: 35px;
    line-height: 60px;
    margin-bottom: 66px;
}
h2 {
    margin: 0;
    font-size: 62px;
    line-height: 72px;
    font-weight: 500;
}
.noteBtn {
    display: block;
    margin: 56px 0 49px;
    color: var(--blue);
    font-size: 37px;
    line-height: 44px;
}
.grid {
    display: grid;
    grid-template-columns: 1fr 1fr;
    column-gap: 48px;
}
`, `
<div class="line date">
    <svg width="48" height="48" viewBox="144 93 144 144" fill="#f5f5f5">
        <circle cx="222" cy="116" r="12"/>
        <path d="M206,132 L222,131 L231,138 L236,153 L256,165 L254,170 L231,161 L227,158 L225,172 L238,188 L249,222 L245,224 L229,200 L207,181 L204,165 L206,148 L197,153 L189,170 L184,168 L189,146z M202,182 L212,190 L206,205 L180,222 L177,219 L195,203z"/>
    </svg>
    <slot name="date"></slot>
    <button aria-label="공개 범위">
        <svg width="60" height="60" viewBox="165 75 180 180" fill="#a6a6a6"><path d="M185,153 h141 v102 h-141z"/><path fill="none" stroke="#a6a6a6" stroke-width="17" d="M218,155 V120 a37,37 0 0 1 74,0 V155"/></svg>
    </button>
</div>
<div class="line">
    <h2><slot name="name"></slot></h2>
    <button aria-label="이름 편집">
        <svg width="60" height="60" viewBox="165 472 180 180" fill="#a6a6a6" fill-rule="evenodd"><path d="M287,501 L315,530 L238,608 L195,624 L210,579z M214,586 L206,612 L232,604z"/></svg>
    </button>
</div>
<button class="noteBtn"><slot name="note"></slot></button>
<slot name="main"></slot>
<div class="grid"><slot></slot></div>
`)
}

window.customElements.define('app-header', AppHeader)
window.customElements.define('tab-bar', TabBar)
window.customElements.define('tab-item', TabItem)
window.customElements.define('weather-badge', WeatherBadge)
window.customElements.define('pace-legend', PaceLegend)
window.customElements.define('route-map', RouteMap)
window.customElements.define('stat-item', StatItem)
window.customElements.define('activity-details', ActivityDetails)
</script>
</body>
</html>
